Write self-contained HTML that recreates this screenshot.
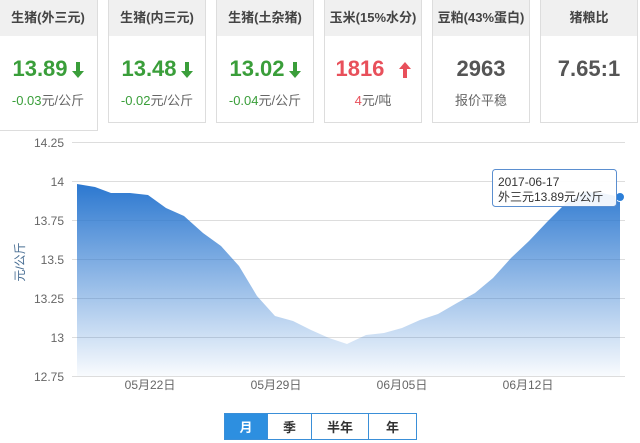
<!DOCTYPE html>
<html><head><meta charset="utf-8"><style>
body{margin:0;width:640px;height:443px;background:#fff;font-family:"Liberation Sans","Noto Sans CJK SC",sans-serif;position:relative;overflow:hidden}
.c{position:absolute;top:0;width:96px;height:122px;border:1px solid #ddd;border-top:none;background:#fff;text-align:center}
.h{height:36px;background:#f0f0f0;line-height:36px;font-size:13px;font-weight:bold;color:#444}
.v{font-size:22px;font-weight:bold;margin-top:19px;height:28px;line-height:28px}
.s{font-size:13px;color:#666;margin-top:7px}
.g{color:#3a9e3a}.r{color:#e8505b}.k{color:#555}
.v svg{vertical-align:-2px;margin-left:4px}
.b{position:absolute;top:413px;height:27px;line-height:27px;text-align:center;font-size:13px;font-weight:bold;border:1px solid #3a8fd8;color:#333;box-sizing:border-box}
</style></head><body>
<div class="c" style="left:-1px;height:130px;border-left:none;width:98px"><div class="h">生猪(外三元)</div><div class="v g">13.89<svg width="12" height="16" viewBox="0 0 12 16"><path d="M4,0h4v9h4l-6,7l-6,-7h4z" fill="#3a9e3a"/></svg></div><div class="s"><span class="g">-0.03</span>元/公斤</div></div>
<div class="c" style="left:108px"><div class="h">生猪(内三元)</div><div class="v g">13.48<svg width="12" height="16" viewBox="0 0 12 16"><path d="M4,0h4v9h4l-6,7l-6,-7h4z" fill="#3a9e3a"/></svg></div><div class="s"><span class="g">-0.02</span>元/公斤</div></div>
<div class="c" style="left:216px"><div class="h">生猪(土杂猪)</div><div class="v g">13.02<svg width="12" height="16" viewBox="0 0 12 16"><path d="M4,0h4v9h4l-6,7l-6,-7h4z" fill="#3a9e3a"/></svg></div><div class="s"><span class="g">-0.04</span>元/公斤</div></div>
<div class="c" style="left:324px"><div class="h">玉米(15%水分)</div><div class="v r">1816 <svg width="12" height="16" viewBox="0 0 12 16" style="margin-left:8px"><path d="M4,16h4v-9h4l-6,-7l-6,7h4z" fill="#e8505b"/></svg></div><div class="s"><span class="r">4</span>元/吨</div></div>
<div class="c" style="left:432px"><div class="h">豆粕(43%蛋白)</div><div class="v k">2963</div><div class="s">报价平稳</div></div>
<div class="c" style="left:540px"><div class="h">猪粮比</div><div class="v k">7.65:1</div></div>
<svg style="position:absolute;left:0;top:0" width="640" height="443">
<defs><linearGradient id="gr" x1="0" y1="0" x2="0" y2="1"><stop offset="0" stop-color="#2c78d0"/><stop offset="1" stop-color="#2c78d0" stop-opacity="0.03"/></linearGradient></defs>
<g stroke="#ddd" stroke-width="1"><line x1="72" x2="625" y1="142.5" y2="142.5"/><line x1="72" x2="625" y1="181.5" y2="181.5"/><line x1="72" x2="625" y1="220.5" y2="220.5"/><line x1="72" x2="625" y1="259.5" y2="259.5"/><line x1="72" x2="625" y1="298.5" y2="298.5"/><line x1="72" x2="625" y1="337.5" y2="337.5"/><line x1="72" x2="625" y1="376.5" y2="376.5"/></g>
<path d="M77,184L95,187L111,193L130,193L148,195L166,208L184,216L203,233L221,246L239,266L257,296L275,316L293,321L311,330L329,338L347,344L366,335L384,333L402,328L420,320L438,314L457,303L475,293L493,278L511,258L529,241L547,222L565,204L584,192L602,193L620,197L620,376L77,376Z" fill="url(#gr)"/>
<circle cx="620" cy="197" r="4.5" fill="#2c7fd8" stroke="#fff" stroke-width="1"/>
<rect x="492.5" y="169.5" width="124" height="37" rx="3" fill="#fff" fill-opacity="0.92" stroke="#5b8fd0"/>
<text x="498" y="186" font-size="12" fill="#333" font-family="Liberation Sans,Noto Sans CJK SC,sans-serif">2017-06-17</text>
<text x="498" y="201" font-size="12" fill="#333" font-family="Liberation Sans,Noto Sans CJK SC,sans-serif">外三元13.89元/公斤</text>
<text transform="translate(24,262) rotate(-90)" text-anchor="middle" font-size="12" fill="#4a6f94" font-family="Liberation Sans,Noto Sans CJK SC,sans-serif">元/公斤</text>
<g font-size="12" fill="#666" text-anchor="end" font-family="Liberation Sans,sans-serif"><text x="64" y="147">14.25</text><text x="64" y="186">14</text><text x="64" y="225">13.75</text><text x="64" y="264">13.5</text><text x="64" y="303">13.25</text><text x="64" y="342">13</text><text x="64" y="381">12.75</text></g>
<g font-size="12" fill="#666" text-anchor="middle" font-family="Liberation Sans,Noto Sans CJK SC,sans-serif"><text x="150" y="389">05月22日</text><text x="276" y="389">05月29日</text><text x="402" y="389">06月05日</text><text x="528" y="389">06月12日</text></g>
</svg>
<div class="b" style="left:224px;width:44px;background:#2d8fe0;color:#fff">月</div>
<div class="b" style="left:267px;width:45px">季</div>
<div class="b" style="left:311px;width:58px">半年</div>
<div class="b" style="left:368px;width:49px">年</div>
</body></html>
